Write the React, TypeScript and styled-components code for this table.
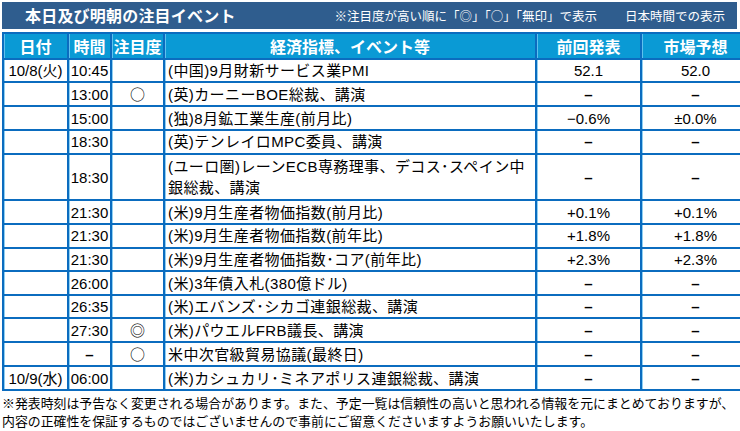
import React from "react";
import styled, { createGlobalStyle } from "styled-components";

const GlobalStyle = createGlobalStyle`
  html, body { margin: 0; padding: 0; background: #ffffff; }
  body { font-family: "Liberation Sans", "Noto Sans CJK JP", sans-serif; color: #000; }
`;

const Page = styled.div`
  width: 740px;
  height: 431px;
  padding: 2px 3px 0 2px;
  box-sizing: border-box;
  display: flex;
  flex-direction: column;
`;

const TitleBar = styled.div`
  height: 27px;
  background: #2f5d8e;
  display: flex;
  align-items: center;
  padding: 0 12px 0 23px;
  color: #fff;
`;

const Title = styled.div`
  font-size: 16px;
  font-weight: bold;
  letter-spacing: 0.2px;
`;

const Note = styled.div<{ $gap?: number }>`
  font-size: 12.5px;
  margin-left: ${(p) => (p.$gap !== undefined ? `${p.$gap}px` : "auto")};
  white-space: nowrap;
`;

const Mark = styled.span`
  font-family: "Noto Sans CJK JP", sans-serif;
`;

const Table = styled.table`
  margin-top: 3px;
  border-collapse: collapse;
  width: 735px;
  table-layout: fixed;
  border: 2px solid #0b6cbf;
`;

const Th = styled.th<{ $w: number }>`
  width: ${(p) => p.$w}px;
  height: 23px;
  background: #0a9ad5;
  color: #fff;
  font-size: 16px;
  font-weight: bold;
  text-align: center;
  padding: 0;
  border: 2px solid #0b6cbf;
  box-shadow: inset 1px 0 0 #5fc0ee;
`;

const Row = styled.tr<{ $h?: number }>`
  height: ${(p) => p.$h ?? 23.6}px;
`;

const Td = styled.td`
  font-size: 15px;
  text-align: center;
  padding: 0;
  border: 2px solid #0b6cbf;
  box-shadow: inset 1px 0 0 #8fd0f2;
  line-height: 21px;
  white-space: nowrap;
  vertical-align: middle;
`;

const EventTd = styled(Td)`
  text-align: left;
  padding-left: 3px;
  letter-spacing: 0.4px;
`;

const Dash = styled.span`
  font-weight: bold;
`;

const Footer = styled.div`
  margin-top: 4px;
  font-size: 12.9px;
  line-height: 18px;
  white-space: nowrap;
`;

type Ev = {
  date?: string;
  time: string;
  mark?: string;
  event: React.ReactNode;
  prev: string;
  fc: string;
  h?: number;
};

const rows: Ev[] = [
  { date: "10/8(火)", time: "10:45", event: "(中国)9月財新サービス業PMI", prev: "52.1", fc: "52.0" },
  { time: "13:00", mark: "○", event: "(英)カーニーBOE総裁、講演", prev: "-", fc: "-" },
  { time: "15:00", event: "(独)8月鉱工業生産(前月比)", prev: "−0.6%", fc: "±0.0%" },
  { time: "18:30", event: "(英)テンレイロMPC委員、講演", prev: "-", fc: "-" },
  {
    time: "18:30",
    event: (
      <>
        (ユーロ圏)レーンECB専務理事、デコス･スペイン中
        <br />
        銀総裁、講演
      </>
    ),
    prev: "-",
    fc: "-",
    h: 46.8,
  },
  { time: "21:30", event: "(米)9月生産者物価指数(前月比)", prev: "+0.1%", fc: "+0.1%" },
  { time: "21:30", event: "(米)9月生産者物価指数(前年比)", prev: "+1.8%", fc: "+1.8%" },
  { time: "21:30", event: "(米)9月生産者物価指数･コア(前年比)", prev: "+2.3%", fc: "+2.3%" },
  { time: "26:00", event: "(米)3年債入札(380億ドル)", prev: "-", fc: "-" },
  { time: "26:35", event: "(米)エバンズ･シカゴ連銀総裁、講演", prev: "-", fc: "-" },
  { time: "27:30", mark: "◎", event: "(米)パウエルFRB議長、講演", prev: "-", fc: "-" },
  { time: "-", mark: "○", event: "米中次官級貿易協議(最終日)", prev: "-", fc: "-" },
  { date: "10/9(水)", time: "06:00", event: "(米)カシュカリ･ミネアポリス連銀総裁、講演", prev: "-", fc: "-" },
];

const cell = (v: string) => (v === "-" ? <Dash>–</Dash> : v);

export default function App() {
  return (
    <>
      <GlobalStyle />
      <Page>
        <TitleBar>
          <Title>本日及び明朝の注目イベント</Title>
          <Note>
            ※注目度が高い順に「<Mark>◎</Mark>」「<Mark>○</Mark>」「無印」で表示
          </Note>
          <Note $gap={28}>日本時間での表示</Note>
        </TitleBar>
        <Table>
          <thead>
            <tr>
              <Th $w={63}>日付</Th>
              <Th $w={41}>時間</Th>
              <Th $w={51}>注目度</Th>
              <Th $w={370}>経済指標、イベント等</Th>
              <Th $w={103}>前回発表</Th>
              <Th $w={107}>市場予想</Th>
            </tr>
          </thead>
          <tbody>
            {rows.map((r, i) => (
              <Row key={i} $h={r.h}>
                <Td>{r.date ?? ""}</Td>
                <Td>{cell(r.time)}</Td>
                <Td>{r.mark ? <Mark>{r.mark}</Mark> : ""}</Td>
                <EventTd>{r.event}</EventTd>
                <Td>{cell(r.prev)}</Td>
                <Td>{cell(r.fc)}</Td>
              </Row>
            ))}
          </tbody>
        </Table>
        <Footer>
          ※発表時刻は予告なく変更される場合があります。また、予定一覧は信頼性の高いと思われる情報を元にまとめておりますが、
          <br />
          内容の正確性を保証するものではございませんので事前にご留意くださいますようお願いいたします。
        </Footer>
      </Page>
    </>
  );
}
